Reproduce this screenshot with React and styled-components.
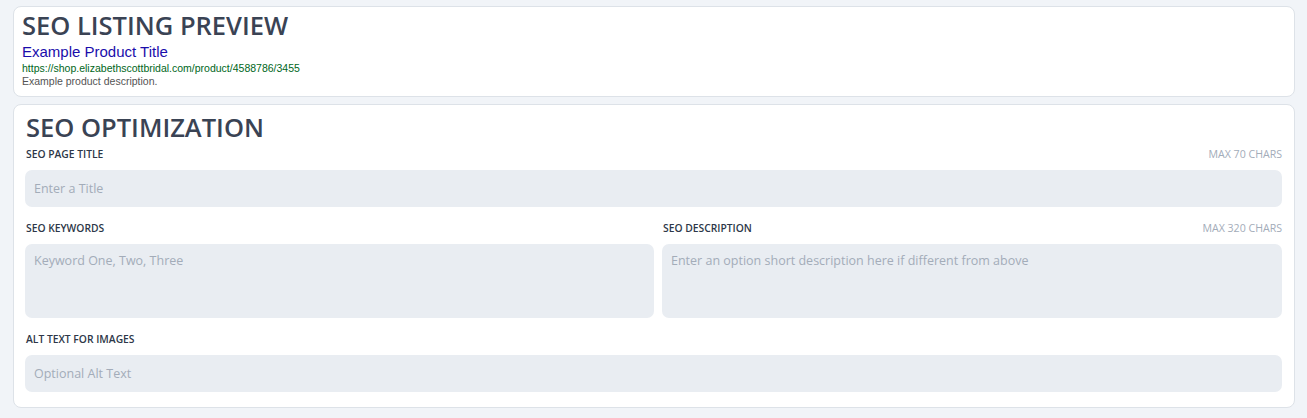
import React from 'react';
import styled, { createGlobalStyle } from 'styled-components';

const GlobalStyle = createGlobalStyle`
  html, body {
    margin: 0;
    padding: 0;
    background: #f1f4f8;
  }
  * { box-sizing: border-box; }
`;

const Page = styled.div`
  display: flex;
  flex-direction: column;
  gap: 7px;
  padding: 6px 12px 10px 13px;
  font-family: 'Open Sans', 'Noto Sans', sans-serif;
`;

const Card = styled.section`
  background: #ffffff;
  border: 1px solid #dde2e8;
  border-radius: 8px;
  padding: ${(p) => p.$pad};
`;

const Heading = styled.h2`
  margin: 0;
  font-size: 25.5px;
  line-height: 1.2;
  font-weight: 600;
  color: #3a4354;
  padding-left: ${(p) => p.$indent || 0}px;
`;

const PreviewTitle = styled.div`
  font-family: 'Liberation Sans', Arial, sans-serif;
  font-size: 15px;
  line-height: 17px;
  color: #1a0dab;
  margin-top: 3px;
`;

const PreviewUrl = styled.div`
  font-family: 'Liberation Sans', Arial, sans-serif;
  font-size: 10.5px;
  line-height: 13px;
  color: #006621;
  margin-top: 2px;
`;

const PreviewDesc = styled.div`
  font-family: 'Liberation Sans', Arial, sans-serif;
  font-size: 10.5px;
  line-height: 13px;
  color: #545454;
`;

const Form = styled.div`
  display: flex;
  flex-direction: column;
  gap: 14px;
  margin-top: 4px;
`;

const Row = styled.div`
  display: grid;
  grid-template-columns: minmax(0, 629fr) minmax(0, 620fr);
  gap: 8px;
`;

const Field = styled.label`
  display: flex;
  flex-direction: column;
  gap: 9px;
`;

const LabelRow = styled.div`
  display: flex;
  justify-content: space-between;
  align-items: baseline;
  font-size: 10.3px;
  line-height: 14px;
  padding-left: 1px;
`;

const LabelText = styled.span`
  font-weight: 600;
  color: #2d3748;
  text-transform: uppercase;
`;

const Limit = styled.span`
  color: #a3acb9;
  font-size: 10.6px;
  text-transform: uppercase;
`;

const inputBase = `
  width: 100%;
  border: none;
  outline: none;
  border-radius: 7px;
  background: #e9edf2;
  font-family: 'Open Sans', 'Noto Sans', sans-serif;
  font-size: 12.5px;
  color: #2d3748;
  padding: 0 9px;
  &::placeholder { color: #a3acb9; }
`;

const TextInput = styled.input`
  ${inputBase}
  height: 37px;
`;

const TextArea = styled.textarea`
  ${inputBase}
  height: 74px;
  resize: none;
  padding-top: 8px;
  line-height: 18px;
  display: block;
`;

function FormField({ label, limit, children }) {
  return (
    <Field>
      <LabelRow>
        <LabelText>{label}</LabelText>
        {limit && <Limit>{limit}</Limit>}
      </LabelRow>
      {children}
    </Field>
  );
}

export default function App() {
  return (
    <>
      <GlobalStyle />
      <Page>
        <Card $pad="2.5px 8px 8px 8px">
          <Heading>SEO LISTING PREVIEW</Heading>
          <PreviewTitle>Example Product Title</PreviewTitle>
          <PreviewUrl>https://shop.elizabethscottbridal.com/product/4588786/3455</PreviewUrl>
          <PreviewDesc>Example product description.</PreviewDesc>
        </Card>
        <Card $pad="7px 12px 15px 11px">
          <Heading $indent={1}>SEO OPTIMIZATION</Heading>
          <Form>
            <FormField label="SEO Page Title" limit="Max 70 chars">
              <TextInput placeholder="Enter a Title" />
            </FormField>
            <Row>
              <FormField label="SEO Keywords">
                <TextArea placeholder="Keyword One, Two, Three" />
              </FormField>
              <FormField label="SEO Description" limit="Max 320 chars">
                <TextArea placeholder="Enter an option short description here if different from above" />
              </FormField>
            </Row>
            <FormField label="Alt Text for Images">
              <TextInput placeholder="Optional Alt Text" />
            </FormField>
          </Form>
        </Card>
      </Page>
    </>
  );
}
